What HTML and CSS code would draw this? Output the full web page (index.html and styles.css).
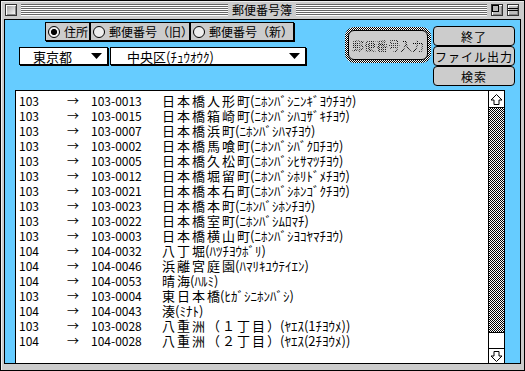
FILE: index.html
```html
<!DOCTYPE html>
<html lang="ja">

<head>
    <meta charset="UTF-8">
    <title>郵便番号簿</title>
    <link rel="stylesheet" href="styles.css">
</head>

<body>
    <div class="window">
        <div class="titlebar">
            <div class="title-side">
                <span class="box close-box"></span>
                <span class="stripes"></span>
            </div>
            <div class="title">郵便番号簿</div>
            <div class="title-side">
                <span class="stripes"></span>
                <span class="box zoom-box">
                    <svg width="10" height="10" viewBox="0 0 10 10" shape-rendering="crispEdges">
                        <rect x="0.5" y="0.5" width="6" height="6" fill="none" stroke="#000"/>
                    </svg>
                </span>
                <span class="box shade-box">
                    <svg width="10" height="10" viewBox="0 0 10 10" shape-rendering="crispEdges">
                        <line x1="0" y1="3.5" x2="10" y2="3.5" stroke="#000"/>
                        <line x1="0" y1="5.5" x2="10" y2="5.5" stroke="#000"/>
                    </svg>
                </span>
            </div>
        </div>

        <div class="content">
            <div class="controls">
                <div class="search-by">
                    <div class="modes">
                        <div class="mode mode-addr"><span class="radio on"></span>住所</div>
                        <div class="mode mode-old"><span class="radio"></span>郵便番号（旧）</div>
                        <div class="mode mode-new"><span class="radio"></span>郵便番号（新）</div>
                    </div>
                    <div class="selects">
                        <div class="select pref">
                            <span>東京都</span>
                            <svg class="tri" width="11" height="6" viewBox="0 0 11 6"><polygon points="0,0 11,0 5.5,6" fill="#000"/></svg>
                        </div>
                        <div class="select city">
                            <span>中央区(ﾁｭｳｵｳｸ)</span>
                            <svg class="tri" width="11" height="6" viewBox="0 0 11 6"><polygon points="0,0 11,0 5.5,6" fill="#000"/></svg>
                        </div>
                    </div>
                </div>

                <div class="actions">
                    <div class="default-ring">
                        <div class="btn btn-disabled"><span>郵便番号入力</span></div>
                    </div>
                    <div class="stack">
                        <div class="btn">終了</div>
                        <div class="btn">ファイル出力</div>
                        <div class="btn">検索</div>
                    </div>
                </div>
            </div>

            <div class="list">
                <div class="rows">
                    <div class="row"><span>103</span><span>→</span><span>103-0013</span><span class="name"><span class="kj">日本橋人形町</span>(ﾆﾎﾝﾊﾞｼﾆﾝｷﾞﾖｳﾁﾖｳ)</span></div>
                    <div class="row"><span>103</span><span>→</span><span>103-0015</span><span class="name"><span class="kj">日本橋箱崎町</span>(ﾆﾎﾝﾊﾞｼﾊｺｻﾞｷﾁﾖｳ)</span></div>
                    <div class="row"><span>103</span><span>→</span><span>103-0007</span><span class="name"><span class="kj">日本橋浜町</span>(ﾆﾎﾝﾊﾞｼﾊﾏﾁﾖｳ)</span></div>
                    <div class="row"><span>103</span><span>→</span><span>103-0002</span><span class="name"><span class="kj">日本橋馬喰町</span>(ﾆﾎﾝﾊﾞｼﾊﾞｸﾛﾁﾖｳ)</span></div>
                    <div class="row"><span>103</span><span>→</span><span>103-0005</span><span class="name"><span class="kj">日本橋久松町</span>(ﾆﾎﾝﾊﾞｼﾋｻﾏﾂﾁﾖｳ)</span></div>
                    <div class="row"><span>103</span><span>→</span><span>103-0012</span><span class="name"><span class="kj">日本橋堀留町</span>(ﾆﾎﾝﾊﾞｼﾎﾘﾄﾞﾒﾁﾖｳ)</span></div>
                    <div class="row"><span>103</span><span>→</span><span>103-0021</span><span class="name"><span class="kj">日本橋本石町</span>(ﾆﾎﾝﾊﾞｼﾎﾝｺﾞｸﾁﾖｳ)</span></div>
                    <div class="row"><span>103</span><span>→</span><span>103-0023</span><span class="name"><span class="kj">日本橋本町</span>(ﾆﾎﾝﾊﾞｼﾎﾝﾁﾖｳ)</span></div>
                    <div class="row"><span>103</span><span>→</span><span>103-0022</span><span class="name"><span class="kj">日本橋室町</span>(ﾆﾎﾝﾊﾞｼﾑﾛﾏﾁ)</span></div>
                    <div class="row"><span>103</span><span>→</span><span>103-0003</span><span class="name"><span class="kj">日本橋横山町</span>(ﾆﾎﾝﾊﾞｼﾖｺﾔﾏﾁﾖｳ)</span></div>
                    <div class="row"><span>104</span><span>→</span><span>104-0032</span><span class="name"><span class="kj">八丁堀</span>(ﾊﾂﾁﾖｳﾎﾞﾘ)</span></div>
                    <div class="row"><span>104</span><span>→</span><span>104-0046</span><span class="name"><span class="kj">浜離宮庭園</span>(ﾊﾏﾘｷﾕｳﾃｲｴﾝ)</span></div>
                    <div class="row"><span>104</span><span>→</span><span>104-0053</span><span class="name"><span class="kj">晴海</span>(ﾊﾙﾐ)</span></div>
                    <div class="row"><span>103</span><span>→</span><span>103-0004</span><span class="name"><span class="kj">東日本橋</span>(ﾋｶﾞｼﾆﾎﾝﾊﾞｼ)</span></div>
                    <div class="row"><span>104</span><span>→</span><span>104-0043</span><span class="name"><span class="kj">湊</span>(ﾐﾅﾄ)</span></div>
                    <div class="row"><span>103</span><span>→</span><span>103-0028</span><span class="name"><span class="kj">八重洲（１丁目）</span>(ﾔｴｽ(1ﾁﾖｳﾒ))</span></div>
                    <div class="row"><span>104</span><span>→</span><span>104-0028</span><span class="name"><span class="kj">八重洲（２丁目）</span>(ﾔｴｽ(2ﾁﾖｳﾒ))</span></div>
                </div>
                <div class="scrollbar">
                    <div class="arrow up">
                        <svg width="13" height="13" viewBox="0 0 13 13"><polygon points="6.5,1.5 12,7 9,7 9,11.5 4,11.5 4,7 1,7" fill="#fff" stroke="#000"/></svg>
                    </div>
                    <div class="track"></div>
                    <div class="thumb"></div>
                    <div class="arrow down">
                        <svg width="13" height="13" viewBox="0 0 13 13"><polygon points="6.5,11.5 12,6 9,6 9,1.5 4,1.5 4,6 1,6" fill="#fff" stroke="#000"/></svg>
                    </div>
                </div>
            </div>
        </div>
    </div>
</body>

</html>
```

FILE: styles.css
```css
* {
    margin: 0;
    padding: 0;
    box-sizing: border-box
}

body {
    background: #fff;
    font-family: "Noto Sans CJK JP", "Noto Sans", sans-serif;
    font-size: 12px;
    color: #000
}

.window {
    width: 525px;
    height: 371px;
    display: flex;
    flex-direction: column;
    padding: 0 3px 6px;
    background: #cccccc;
    border: 1px solid #000;
    box-shadow: inset 1px 1px 0 #eee
}

/* title bar */
.titlebar {
    height: 18px;
    display: grid;
    grid-template-columns: 1fr auto 1fr;
    align-items: center;
    padding: 0 2px 0 1px
}

.title-side {
    display: flex;
    align-items: center;
    gap: 4px
}

.stripes {
    flex: 1;
    height: 12px;
    background: repeating-linear-gradient(to bottom, #666 0 1px, #fff 1px 2px)
}

.title {
    padding: 0 4px;
    line-height: 18px
}

.box {
    width: 12px;
    height: 12px;
    display: flex;
    align-items: center;
    justify-content: center;
    border: 1px solid #333;
    background: #bbb;
    box-shadow: inset 1px 1px 0 #fff, inset -1px -1px 0 #888
}

.close-box {
    background: linear-gradient(135deg, #999, #fff)
}

/* blue content */
.content {
    flex: 1;
    display: flex;
    flex-direction: column;
    background: #66ccff;
    border: 1px solid #000
}

.controls {
    height: 70px;
    display: flex;
    justify-content: space-between;
    padding-right: 5px
}

.search-by {
    padding-top: 2px
}

.modes {
    display: flex;
    margin-left: 40px
}

.mode {
    height: 19px;
    display: flex;
    align-items: center;
    gap: 4px;
    padding-left: 2px;
    background: #cccccc;
    border: 1px solid #000;
    box-shadow: 1px 1px 0 #000;
    white-space: nowrap
}

.mode-addr {
    width: 45px
}

.mode-old {
    width: 100px
}

.mode-new {
    width: 104px
}

.radio {
    width: 12px;
    height: 12px;
    flex: none;
    border: 1px solid #000;
    border-radius: 50%;
    background: #eee
}

.radio.on {
    background: radial-gradient(circle, #000 0 2.8px, #eee 3.2px)
}

.selects {
    display: flex;
    gap: 2px;
    margin: 6px 0 0 14px;
    font-size: 13px
}

.select {
    height: 18px;
    display: flex;
    align-items: center;
    justify-content: space-between;
    padding: 0 5px 0 13px;
    background: #fff;
    border: 1px solid #000;
    box-shadow: 1px 1px 0 #000
}

.pref {
    width: 89px
}

.city {
    width: 196px;
    padding-left: 16px
}

/* buttons */
.actions {
    display: flex;
    align-items: flex-start;
    gap: 2px;
    padding-top: 6px
}

.default-ring {
    width: 86px;
    height: 36px;
    margin-top: 1px;
    padding: 3px;
    border-radius: 9px;
    background: repeating-conic-gradient(#000 0 25%, #fff 0 50%) 0 0 / 2px 2px
}

.btn {
    height: 20px;
    display: flex;
    align-items: center;
    justify-content: center;
    letter-spacing: 1px;
    background: #cccccc;
    border: 1px solid #000;
    border-radius: 4px
}

.btn-disabled {
    height: 100%;
    letter-spacing: 0;
    border-radius: 6px
}

.btn-disabled span {
    color: transparent;
    background: repeating-conic-gradient(#000 0 25%, #ccc 0 50%) 0 0 / 2px 2px;
    -webkit-background-clip: text;
    background-clip: text
}

.stack {
    width: 82px;
    display: flex;
    flex-direction: column
}

/* result list */
.list {
    flex: 1;
    display: flex;
    margin: 0 15px 0 10px;
    background: #fff;
    border: 1px solid #000;
    border-bottom: 0;
    overflow: hidden
}

.rows {
    flex: 1;
    padding: 2px 0 0 3px
}

.row {
    height: 15px;
    line-height: 15px;
    display: grid;
    grid-template-columns: 48px 24px 71px auto;
    white-space: nowrap
}

.name {
    font-size: 13px
}

.kj {
    letter-spacing: 2px;
    margin-right: -2px
}

.scrollbar {
    width: 16px;
    display: flex;
    flex-direction: column;
    border-left: 1px solid #000
}

.arrow {
    flex: none;
    display: flex;
    align-items: center;
    justify-content: center
}

.arrow.up {
    height: 17px;
    border-bottom: 1px solid #000
}

.arrow.down {
    height: 14px
}

.track {
    flex: 1;
    background: repeating-conic-gradient(#000 0 25%, #fff 0 50%) 0 0 / 2px 2px
}

.thumb {
    flex: none;
    height: 17px;
    background: #fff;
    border-top: 1px solid #000;
    border-bottom: 1px solid #000
}
```
